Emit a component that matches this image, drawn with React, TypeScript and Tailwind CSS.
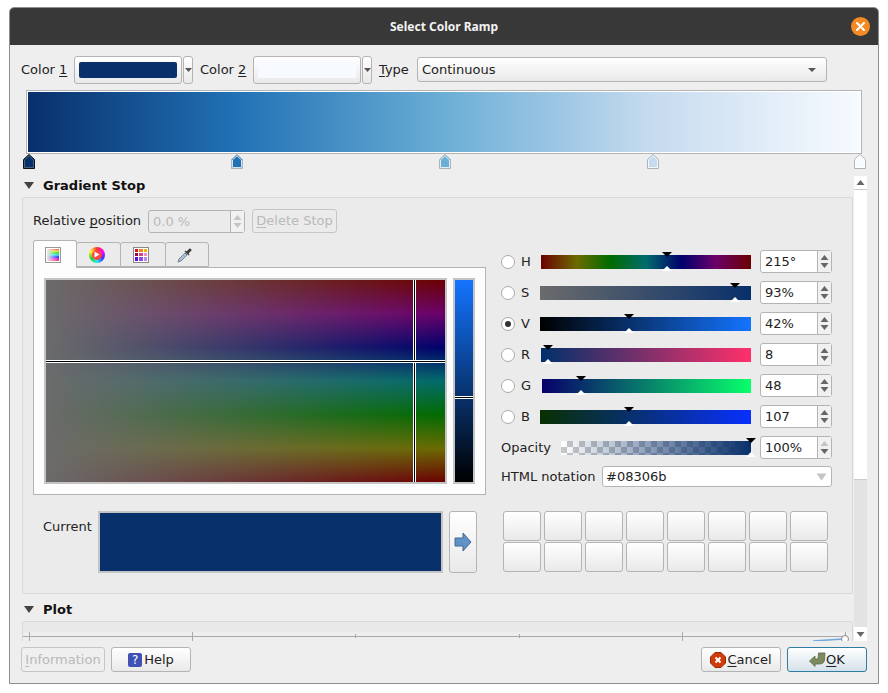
import type { ReactNode } from "react";

const btn = "rounded-[3px] border border-[#b4b4b4] bg-linear-to-b from-white to-[#e9e9e9]";

function Arrow({ up, muted }: { up?: boolean; muted?: boolean }) {
  return (
    <svg width="9" height="5" viewBox="0 0 9 5" className={muted ? "text-[#c4c4c4]" : "text-[#666]"}>
      <path d={up ? "M0.5 5 L4.5 0 L8.5 5 Z" : "M0.5 0 L4.5 5 L8.5 0 Z"} fill="currentColor" />
    </svg>
  );
}

function Key({ children }: { children: ReactNode }) {
  return <span className="underline underline-offset-2">{children}</span>;
}

function Spin({ value, w = "w-[72px]", disabled, dimUp }: { value: string; w?: string; disabled?: boolean; dimUp?: boolean }) {
  return (
    <div className={`flex h-[23px] ${w} rounded-[3px] border border-[#b4b4b4] ${disabled ? "bg-[#ebebeb] text-[#b9b9b9]" : "bg-white text-[#222]"}`}>
      <div className="flex-1 pl-[4px] leading-[21px]">{value}</div>
      <div className="flex w-[14px] flex-col items-center justify-center gap-[3px] border-l border-[#b4b4b4] bg-[#f1f1f1]">
        <Arrow up muted={disabled || dimUp} />
        <Arrow muted={disabled} />
      </div>
    </div>
  );
}

function ColorButton({ swatch }: { swatch: string }) {
  return (
    <div className="flex items-stretch">
      <div className={`${btn} h-[28px] w-[108px] px-[4px] py-[5px]`}>
        <div className={`h-full rounded-[2px] ${swatch}`} />
      </div>
      <div className={`${btn} ml-px flex h-[28px] w-[10px] items-center justify-center`}>
        <svg width="7" height="4" viewBox="0 0 7 4"><path d="M0 0 L7 0 L3.5 4 Z" fill="#555" /></svg>
      </div>
    </div>
  );
}

function Stop({ fill, dark }: { fill: string; dark?: boolean }) {
  return (
    <svg width="12" height="15" viewBox="0 0 12 15" className="shrink-0">
      <path d="M0.5 14.5 V5.5 L6 0.5 L11.5 5.5 V14.5 Z" fill={fill} stroke={dark ? "#111" : "#aeb4b8"} />
      <path d="M1.5 13.5 V6 L6 1.8 L10.5 6 V13.5 Z" fill={fill} stroke={dark ? "#5b6f8c" : "#fff"} strokeWidth="0.8" />
    </svg>
  );
}

const sliders = [
  { name: "H", value: "215°", start: "ml-px", pos: 127, bar: "bg-[linear-gradient(to_right,#6b0000,#6b6b00_17%,#006b00_33%,#006b6b_50%,#00006b_67%,#6b006b_83%,#6b0000)]" },
  { name: "S", value: "93%", start: "", pos: 195, bar: "bg-[linear-gradient(to_right,#6b6b6b,#08306b)]" },
  { name: "V", value: "42%", start: "", pos: 89, checked: true, bar: "bg-[linear-gradient(to_right,#000000,#1374ff)]" },
  { name: "R", value: "8", start: "ml-px", pos: 8, bar: "bg-[linear-gradient(to_right,#00306b,#ff306b)]" },
  { name: "G", value: "48", start: "ml-[2px]", pos: 41, bar: "bg-[linear-gradient(to_right,#08006b,#08ff6b)]" },
  { name: "B", value: "107", start: "", pos: 89, bar: "bg-[linear-gradient(to_right,#083000,#0830ff)]" },
];

function Handles({ left }: { left: number }) {
  return (
    <>
      <svg width="10" height="5" viewBox="0 0 10 5" className="absolute top-[-1px] -translate-x-1/2" style={{ left }}>
        <path d="M0 0 H10 L5 5 Z" fill="#000" />
      </svg>
      <svg width="10" height="5" viewBox="0 0 10 5" className="absolute bottom-0 -translate-x-1/2" style={{ left }}>
        <path d="M0 5 H10 L5 0 Z" fill="#fff" />
      </svg>
    </>
  );
}

function GradientIcon() {
  return (
    <div className="h-[16px] w-[16px] border border-[#999] bg-white p-px">
      <div className="relative h-full w-full bg-[linear-gradient(to_bottom,#f33,#ee2,#2d2,#2ee,#22f,#e2e,#f33)]">
        <div className="absolute inset-0 bg-linear-to-r from-[#e8e8e8] to-transparent" />
      </div>
    </div>
  );
}

function WheelIcon() {
  return (
    <div className="flex h-[16px] w-[16px] items-center justify-center rounded-full bg-[conic-gradient(#f33,#f0f,#33f,#2ee,#3c3,#fe2,#f33)]">
      <div className="flex h-[10px] w-[10px] items-center justify-center rounded-full bg-[#f44]">
        <svg width="6" height="7" viewBox="0 0 6 7"><path d="M0.5 0.5 L5.5 3.5 L0.5 6.5 Z" fill="#fff" /></svg>
      </div>
    </div>
  );
}

function SwatchIcon() {
  const cells = ["bg-[#e0101c]", "bg-[#f28a10]", "bg-[#f5b000]", "bg-[#8c0f3c]", "bg-[#d8408f]", "bg-[#f58cc0]", "bg-[#5a10d8]", "bg-[#8f45e8]", "bg-[#b48cf0]"];
  return (
    <div className="grid h-[16px] w-[16px] grid-cols-3 gap-px border border-[#888] bg-white p-px">
      {cells.map((c, i) => <div key={i} className={c} />)}
    </div>
  );
}

function PickerIcon() {
  return (
    <svg width="16" height="16" viewBox="0 0 16 16">
      <path d="M1 15 L2 12 L8 6 L10 8 L4 14 Z" fill="#a9c4de" stroke="#667" strokeWidth="0.8" />
      <path d="M7.5 4.5 L11.5 8.5 L12.5 7.5 L11.5 6.5 L14.5 3.5 A1.7 1.7 0 0 0 12.5 1.5 L9.5 4.5 L8.5 3.5 Z" fill="#3a3a3a" />
    </svg>
  );
}

function Tab({ children, active, w }: { children: ReactNode; active?: boolean; w: string }) {
  return (
    <div className={`flex items-center justify-center rounded-t-[3px] border border-[#b4b4b4] pr-[4px] ${w} ${active ? "relative z-10 -mb-px h-[28px] border-b-0 bg-[#fdfdfd]" : "-ml-px h-[25px] bg-[#ebebeb]"}`}>
      {children}
    </div>
  );
}

function Section({ title }: { title: string }) {
  return (
    <div className="flex items-center pl-[2px] font-bold text-[#111]">
      <svg width="10" height="7" viewBox="0 0 10 7" className="mr-[9px]"><path d="M0 0 H10 L5 7 Z" fill="#444" /></svg>
      {title}
    </div>
  );
}

function BottomButton({ children, disabled, primary, w }: { children: ReactNode; disabled?: boolean; primary?: boolean; w: string }) {
  const tone = primary
    ? "border-[#2f7da3] bg-linear-to-b from-white to-[#d5e2ea]"
    : disabled
      ? "border-[#c6c6c6] bg-[#efefef] text-[#b9b9b9]"
      : "border-[#b4b4b4] bg-linear-to-b from-white to-[#e9e9e9]";
  return <div className={`flex h-[25px] items-center justify-center rounded-[3px] border ${tone} ${w}`}>{children}</div>;
}

export default function App() {
  return (
    <div className="h-[693px] w-[888px] overflow-hidden bg-white pl-[9px] pt-[7px] font-['DejaVu_Sans',sans-serif] text-[13px] text-[#222]">
      <div className="h-[677px] w-[870px] rounded-t-[5px] border border-[#8e8e8e] bg-[#eeeeee]">
        {/* title bar */}
        <div className="relative flex h-[37px] items-center justify-center rounded-t-[4px] bg-[#383838] font-['Noto_Sans',sans-serif] text-[12px] font-bold text-[#f2f2f2]">
          Select Color Ramp
          <div className="absolute right-[8px] top-[9px] flex h-[19px] w-[19px] items-center justify-center rounded-full bg-[#f58a24]">
            <svg width="9" height="9" viewBox="0 0 9 9"><path d="M1 1 L8 8 M8 1 L1 8" stroke="#fff" strokeWidth="2" strokeLinecap="round" /></svg>
          </div>
        </div>

        {/* color row */}
        <div className="flex items-center pl-[11px] pt-[11px]">
          <span className="w-[53px]">Color <Key>1</Key></span>
          <ColorButton swatch="bg-[#08306b]" />
          <span className="ml-[7px] w-[53px]">Color <Key>2</Key></span>
          <ColorButton swatch="bg-[#f7fbff]" />
          <span className="ml-[7px] w-[38px]"><Key>T</Key>ype</span>
          <div className={`${btn} -mt-px flex h-[25px] w-[410px] items-center justify-between pl-[4px] pr-[10px]`}>
            Continuous
            <svg width="8" height="4" viewBox="0 0 8 4"><path d="M0 0 H8 L4 4 Z" fill="#555" /></svg>
          </div>
        </div>

        {/* ramp */}
        <div className="ml-[16px] mt-[6px] h-[64px] w-[836px] border border-[#b4b4b4] bg-white p-px">
          <div className="h-full w-full bg-[linear-gradient(to_right,#08306b,#2171b5_25%,#6baed6_50%,#c6dbef_75%,#f7fbff)]" />
        </div>
        <div className="ml-[13px] flex h-[15px] w-[843px] gap-[196px]">
          <Stop fill="#08306b" dark />
          <Stop fill="#2171b5" />
          <Stop fill="#6baed6" />
          <Stop fill="#c6dbef" />
          <div className="-ml-px"><Stop fill="#f7fbff" /></div>
        </div>

        {/* scroll area */}
        <div className="ml-[12px] mt-[7px] flex h-[465px] w-[845px] overflow-hidden">
          <div className="w-[831px] shrink-0">
            <div className="flex h-[21px] items-center pb-[2px]"><Section title="Gradient Stop" /></div>
            <div className="h-[397px] rounded-[2px] border border-[#d8d8d8] bg-[#ebebeb] pl-[10px] pt-[11px]">
              <div className="flex items-center">
                <span className="w-[115px]">Relative <Key>p</Key>osition</span>
                <Spin value="0.0 %" w="w-[97px]" disabled />
                <div className="ml-[7px] flex h-[24px] w-[85px] items-center justify-center rounded-[3px] border border-[#c6c6c6] text-[#b9b9b9]"><Key>D</Key>elete Stop</div>
              </div>

              <div className="mt-[7px] flex">
                <div className="w-[453px] shrink-0">
                  <div className="flex h-[27px] items-end">
                    <Tab active w="w-[44px]"><GradientIcon /></Tab>
                    <Tab w="w-[45px]"><WheelIcon /></Tab>
                    <Tab w="w-[46px]"><SwatchIcon /></Tab>
                    <Tab w="w-[44px]"><PickerIcon /></Tab>
                  </div>
                  <div className="flex h-[228px] gap-[6px] border border-[#b4b4b4] bg-[#fdfdfd] pl-[10px] pt-[10px]">
                    <div className="relative h-[206px] w-[403px] border-2 border-[#c4c4c4] bg-[linear-gradient(to_bottom,#6b0000,#6b006b_16.67%,#00006b_33.33%,#006b6b_50%,#006b00_66.67%,#6b6b00_83.33%,#6b0000)]">
                      <div className="absolute inset-0 bg-linear-to-r from-[#6b6b6b] to-transparent" />
                      {/* crosshair */}
                      <div className="absolute inset-y-0 left-[367px] w-[3px] border-x border-white bg-black" />
                      <div className="absolute inset-x-0 top-[80px] h-[3px] border-y border-white bg-black" />
                    </div>
                    <div className="relative h-[206px] w-[22px] border-2 border-[#c4c4c4] bg-[linear-gradient(to_top,#000000,#1374ff)]">
                      <div className="absolute inset-x-0 top-[116px] h-[3px] border-y border-white bg-black" />
                    </div>
                  </div>
                </div>

                {/* sliders */}
                <div className="ml-[15px] w-[331px] pt-[10px]">
                  <div className="flex flex-col gap-[8px]">
                    {sliders.map((s) => (
                      <div key={s.name} className="flex h-[23px] items-center">
                        <div className="flex h-[14px] w-[14px] shrink-0 items-center justify-center rounded-full border border-[#aaa] bg-white">
                          {s.checked && <div className="h-[6px] w-[6px] rounded-full bg-[#333]" />}
                        </div>
                        <span className="ml-[6px] w-[19px]">{s.name}</span>
                        <div className="relative h-[18px] w-[211px] py-[2px]">
                          <div className={`h-[14px] ${s.start} ${s.bar}`} />
                          <Handles left={s.pos} />
                        </div>
                        <div className="ml-[9px]"><Spin value={s.value} /></div>
                      </div>
                    ))}
                    <div className="flex h-[23px] items-center">
                      <span className="w-[60px]">Opacity</span>
                      <div className="relative h-[18px] w-[190px] py-[2px]">
                        <div className="h-[14px] bg-[linear-gradient(to_right,#08306b00,#08306b),repeating-conic-gradient(#c8c8c8_0_25%,#ffffff_0_50%)] bg-[length:100%_100%,12px_12px]" />
                        <Handles left={190} />
                      </div>
                      <div className="ml-[9px]"><Spin value="100%" dimUp /></div>
                    </div>
                  </div>
                  <div className="mt-[7px] flex items-center">
                    <span className="w-[101px]">HTML notation</span>
                    <div className="flex h-[21px] w-[230px] items-center justify-between rounded-[3px] border border-[#b4b4b4] bg-white pl-[3px] pr-[4px]">
                      #08306b
                      <svg width="11" height="8" viewBox="0 0 11 8"><path d="M0.5 0.5 H10.5 L5.5 7.5 Z" fill="#c4c4c4" /></svg>
                    </div>
                  </div>
                </div>
              </div>

              {/* current colour */}
              <div className="mt-[16px] flex">
                <span className="w-[65px] pl-[10px] pt-[6px]">Current</span>
                <div className="h-[62px] w-[345px] border-2 border-[#c4c4c4] bg-[#08306b]" />
                <div className={`${btn} ml-[6px] flex h-[62px] w-[28px] items-center justify-center`}>
                  <svg width="18" height="20" viewBox="0 0 18 20"><path d="M1 6 H9 V1 L17 10 L9 19 V14 H1 Z" fill="#5f93c8" stroke="#46688c" /></svg>
                </div>
                <div className="ml-[26px] grid grid-cols-[repeat(8,38px)] grid-rows-[30px_30px] gap-x-[3px] gap-y-px">
                  {Array.from({ length: 16 }, (_, i) => <div key={i} className={btn} />)}
                </div>
              </div>
            </div>

            <div className="flex h-[27px] items-center pt-[4px]"><Section title="Plot" /></div>
            <div className="h-[24px] rounded-t-[2px] border border-b-0 border-[#d8d8d8] bg-[#eeeeee]">
              <div className="h-[10px] bg-[#e9e9e9]" />
              <svg width="829" height="13" viewBox="0 0 829 13" className="block">
                <path d="M0 4.5 H822" stroke="#aaa" />
                <path d="M6.5 0 V9 M169.5 0 V9 M332.5 2 V6 M496.5 2 V6 M659.5 0 V9 M822.5 0 V9" stroke="#aaa" />
                <path d="M790 9 L820 7" stroke="#6fa8dc" strokeWidth="1.5" />
                <circle cx="822" cy="7" r="3.5" fill="#fff" stroke="#888" />
              </svg>
            </div>
          </div>

          {/* scrollbar */}
          <div className="ml-px flex w-[13px] shrink-0 flex-col">
            <div className="flex h-[14px] items-center justify-center border-b border-[#ccc] bg-white"><Arrow up /></div>
            <div className="h-[290px] border-b border-[#ccc] bg-white" />
            <div className="flex-1 bg-[#e3e3e3]" />
            <div className="flex h-[14px] items-center justify-center bg-white"><Arrow /></div>
          </div>
        </div>

        {/* bottom buttons */}
        <div className="mt-[6px] flex items-center pl-[11px]">
          <BottomButton disabled w="w-[84px]"><Key>I</Key>nformation</BottomButton>
          <div className="ml-[6px]">
            <BottomButton w="w-[80px]">
              <span className="mr-[2px] flex h-[14px] w-[14px] items-center justify-center rounded-[2px] bg-[#3f51b5] text-[12px] leading-none text-white">?</span>
              Help
            </BottomButton>
          </div>
          <div className="ml-[510px]">
            <BottomButton w="w-[80px]">
              <svg width="16" height="16" viewBox="0 0 16 16" className="mr-px">
                <path d="M5 0.5 H11 L15.5 5 V11 L11 15.5 H5 L0.5 11 V5 Z" fill="#d23c0c" stroke="#8f2a08" />
                <path d="M5.5 5.5 L10.5 10.5 M10.5 5.5 L5.5 10.5" stroke="#fff" strokeWidth="2" />
              </svg>
              <Key>C</Key>ancel
            </BottomButton>
          </div>
          <div className="ml-[6px]">
            <BottomButton primary w="w-[80px]">
              <svg width="17" height="15" viewBox="0 0 17 15">
                <path d="M0.5 9 L6 4 V7 H9 L9.5 1 H16 L15.5 8 C15 11 13 12 10 12 H6 V14.5 Z" fill="#7d8a60" stroke="#5c6a44" strokeWidth="0.8" />
              </svg>
              <Key>O</Key>K
            </BottomButton>
          </div>
        </div>
      </div>
    </div>
  );
}
